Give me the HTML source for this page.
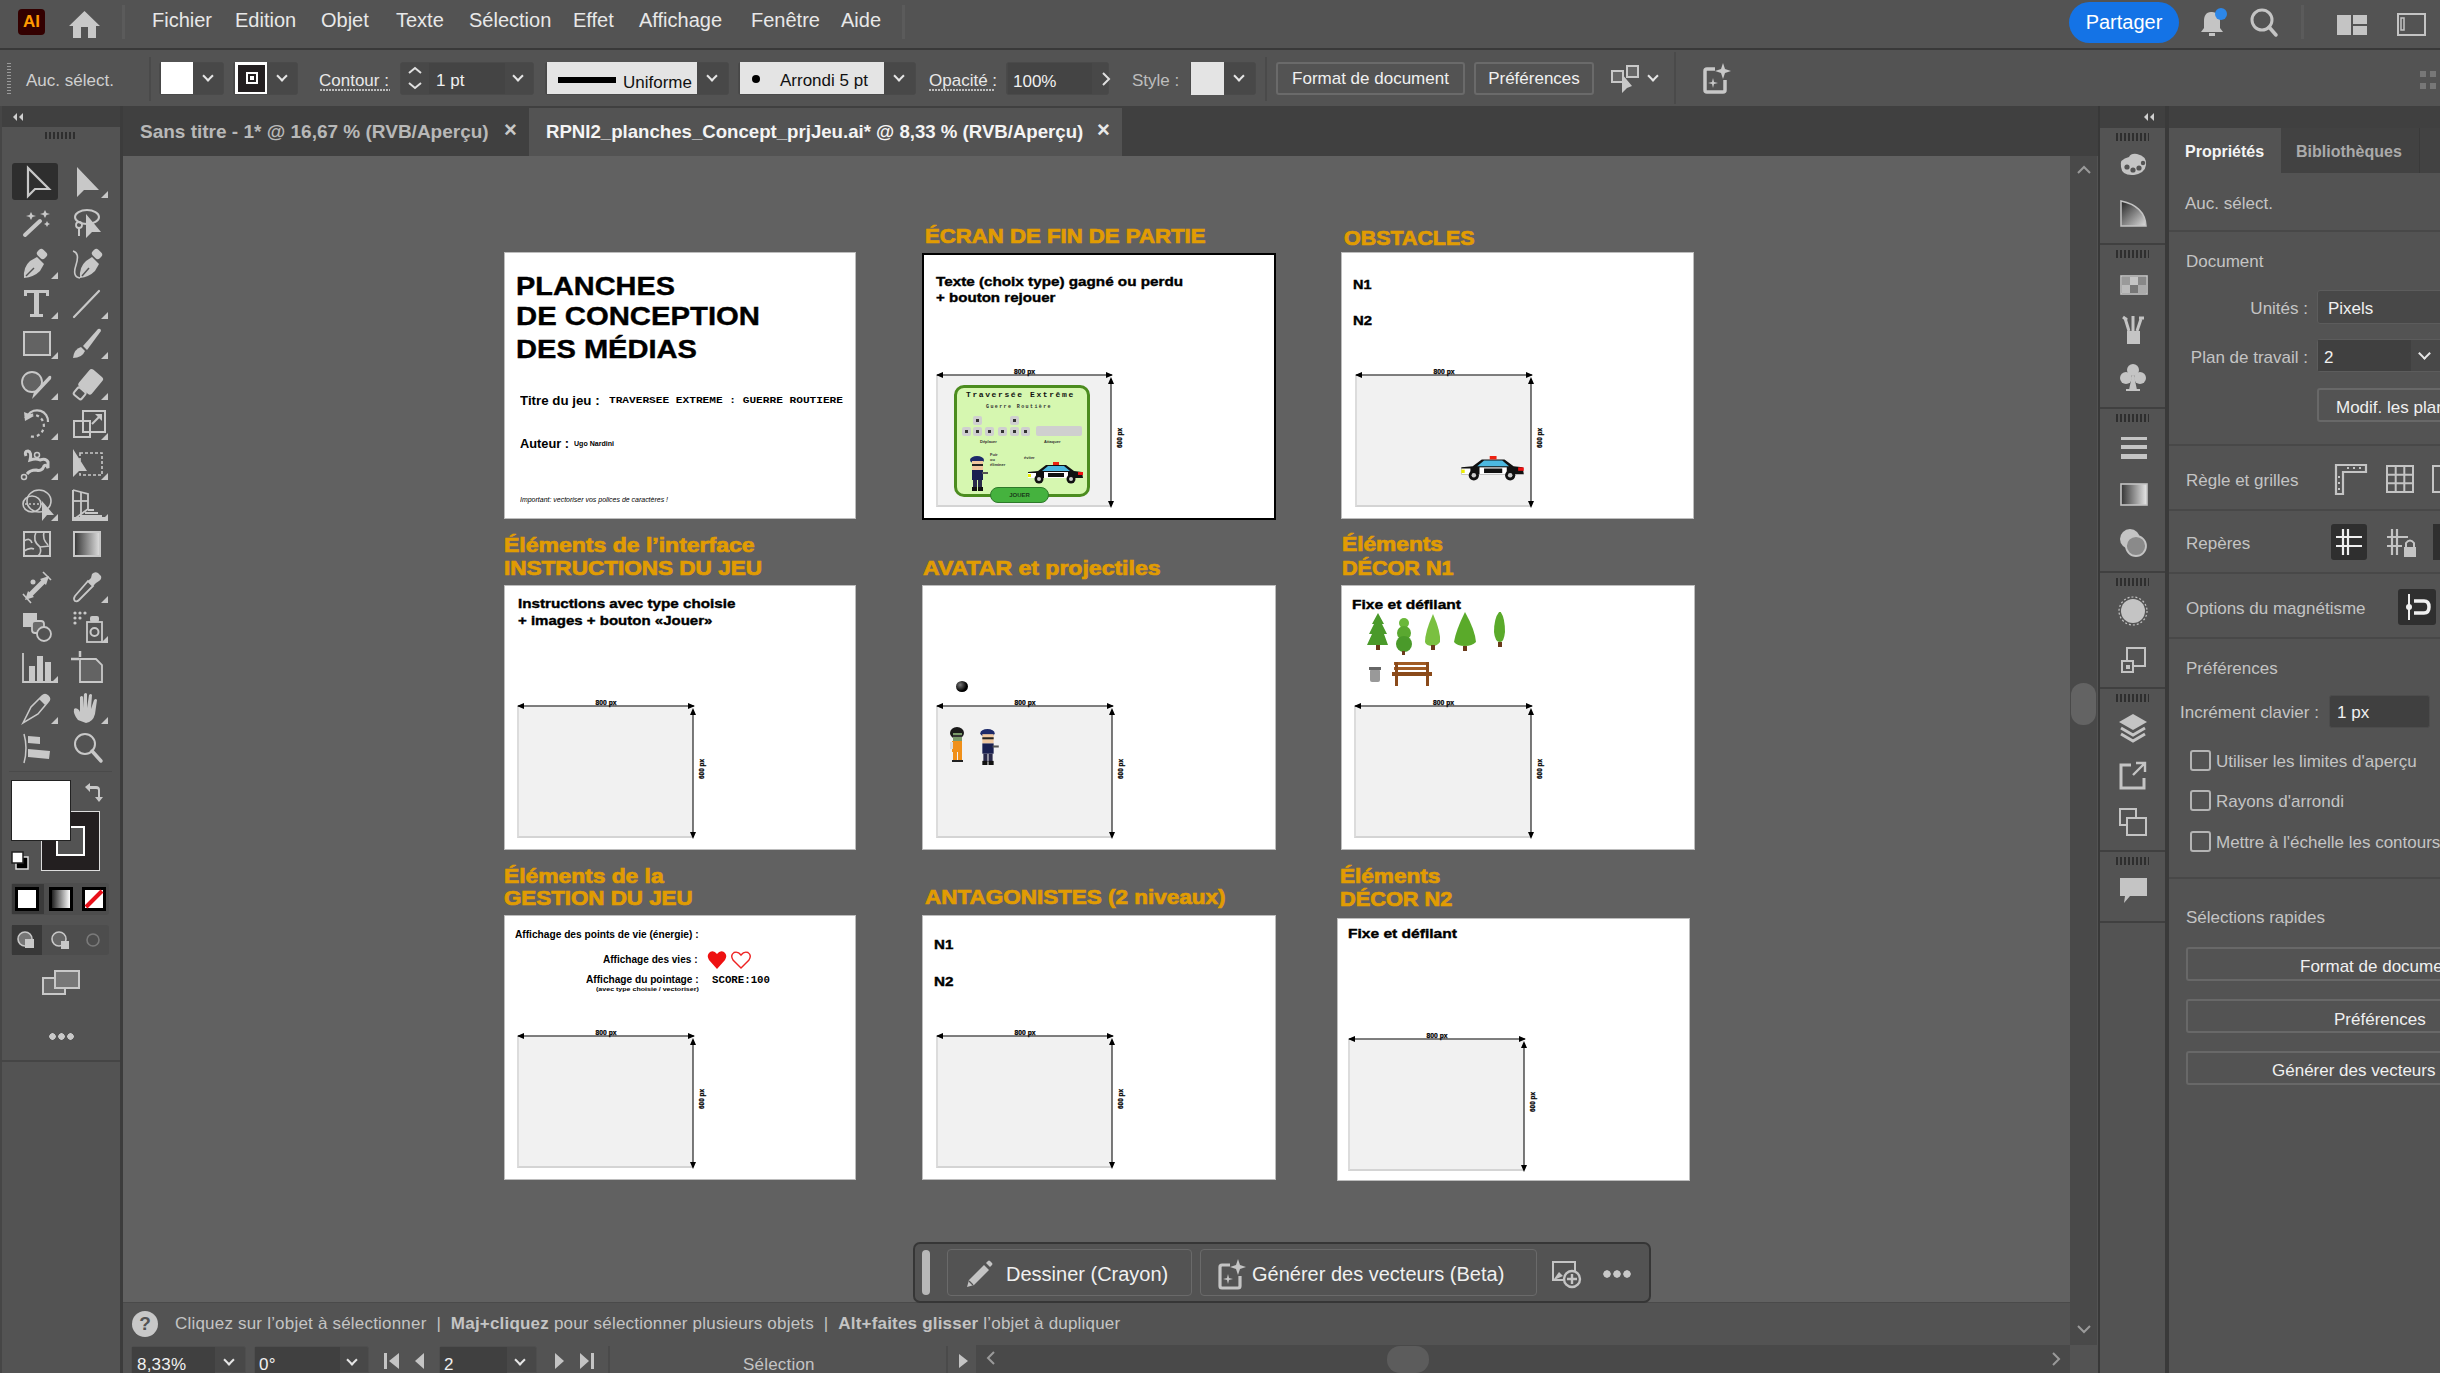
<!DOCTYPE html>
<html><head><meta charset="utf-8">
<style>
*{box-sizing:border-box;margin:0;padding:0}
html,body{width:2440px;height:1373px;overflow:hidden;background:#535353;font-family:"Liberation Sans",sans-serif;color:#e6e6e6}
.a{position:absolute}
#menubar{left:0;top:0;width:2440px;height:48px;background:#535353}
#menusep{left:0;top:48px;width:2440px;height:2px;background:#393939}
#ctrl{left:0;top:50px;width:2440px;height:56px;background:#535353}
#tlhead{left:0;top:106px;width:121px;height:21px;background:#404040}
#tools{left:0;top:127px;width:121px;height:934px;background:#535353}
#tabbar{left:123px;top:106px;width:1975px;height:50px;background:#404040}
#canvas{left:123px;top:156px;width:1947px;height:1147px;background:#616161}
#vscroll{left:2070px;top:156px;width:27px;height:1189px;background:#494949}
#hint{left:123px;top:1303px;width:1947px;height:42px;background:#535353}
#bottom{left:123px;top:1345px;width:1975px;height:28px;background:#535353}
#rhead{left:2100px;top:106px;width:340px;height:22px;background:#404040}
#ricons{left:2100px;top:128px;width:64px;height:1245px;background:#535353}
#rpanel{left:2168px;top:128px;width:272px;height:1245px;background:#535353}
.mi{position:absolute;top:9px;font-size:20px;color:#e8e8e8;white-space:nowrap}
.ab{position:absolute;background:#fff;border:1px solid #c9c9c9}
.cl{font-size:17px;color:#cfcfcf;white-space:nowrap;line-height:23px}
.box{border:1px solid #4a4a4a;border-radius:3px;background:#484848}
.chev{width:8px;height:8px;border-right:2px solid #e6e6e6;border-bottom:2px solid #e6e6e6;transform:rotate(45deg)}
.btn{border:2px solid #6a6a6a;border-radius:3px;color:#f0f0f0;font-size:17px;line-height:29px;text-align:center;white-space:nowrap}
.tab{font-size:19px;font-weight:bold;white-space:nowrap;line-height:22px}
.pt{font-size:17px;color:#c4c4c4;white-space:nowrap;line-height:23px}
.sep{left:2169px;width:271px;height:2px;background:#484848}
.cb{left:2190px;width:21px;height:21px;border:2px solid #b4b4b4;border-radius:3px}
.pbtn{left:2186px;width:260px;height:34px;border:2px solid #686868;border-radius:3px}
.ht{font-size:17px;color:#c4c4c4;white-space:nowrap;line-height:20px;letter-spacing:0.2px}
.tb{font-size:20px;color:#f0f0f0;white-space:nowrap;line-height:24px}
.ttl{position:absolute;color:#e09b0b;font-weight:bold;font-size:21px;line-height:23px;white-space:nowrap;letter-spacing:0.2px}
</style></head><body>
<div class="a" id="menubar"></div>
<div class="a" id="menusep"></div>
<div class="a" id="ctrl"></div>
<div class="a" id="tlhead"></div>
<div class="a" id="tools"></div>
<div class="a" id="tabbar"></div>
<div class="a" id="canvas"></div>
<div class="a" id="vscroll"></div>
<div class="a" id="hint"></div>
<div class="a" id="bottom"></div>
<div class="a" id="rhead"></div>
<div class="a" id="ricons"></div>
<div class="a" id="rpanel"></div>

<!-- menu -->
<div class="a" style="left:18px;top:9px;width:27px;height:26px;background:#330000;border-radius:4px"></div>
<div class="a" style="left:23px;top:12px;width:18px;font-weight:bold;font-size:17px;color:#ff9a00;letter-spacing:0px">AI</div>
<svg class="a" style="left:68px;top:10px" width="33" height="29" viewBox="0 0 33 29"><path d="M16.5 1 L32 16 L28 16 L28 28 L20 28 L20 17 L13 17 L13 28 L5 28 L5 16 L1 16 Z" fill="#c8c8c8"/></svg>
<div class="a" style="left:122px;top:5px;width:3px;height:34px;background:#5b5b5b"></div>
<span class="mi" style="left:152px">Fichier</span>
<span class="mi" style="left:235px">Edition</span>
<span class="mi" style="left:321px">Objet</span>
<span class="mi" style="left:396px">Texte</span>
<span class="mi" style="left:469px">Sélection</span>
<span class="mi" style="left:573px">Effet</span>
<span class="mi" style="left:639px">Affichage</span>
<span class="mi" style="left:751px">Fenêtre</span>
<span class="mi" style="left:841px">Aide</span>
<div class="a" style="left:902px;top:5px;width:3px;height:34px;background:#5b5b5b"></div>
<div class="a" style="left:2069px;top:2px;width:110px;height:41px;background:#1473e6;border-radius:21px;color:#fff;font-size:20px;line-height:41px;text-align:center">Partager</div>
<svg class="a" style="left:2198px;top:6px" width="36" height="32" viewBox="0 0 36 32"><path d="M13 6 C8 6 6 10 6 15 L6 22 L3 26 L25 26 L22 22 L22 15 C22 10 19 6 14 6 Z" fill="#c4c4c4"/><rect x="11" y="27" width="6" height="3" fill="#c4c4c4"/><circle cx="23" cy="8" r="6" fill="#2d87e8"/></svg>
<svg class="a" style="left:2246px;top:6px" width="36" height="34" viewBox="0 0 36 34"><circle cx="16" cy="14" r="10" fill="none" stroke="#c4c4c4" stroke-width="3"/><line x1="23" y1="21" x2="30" y2="29" stroke="#c4c4c4" stroke-width="3.5" stroke-linecap="round"/></svg>
<div class="a" style="left:2301px;top:5px;width:3px;height:34px;background:#5b5b5b"></div>
<svg class="a" style="left:2337px;top:15px" width="31" height="21" viewBox="0 0 31 21"><rect x="0" y="0" width="14" height="20" fill="#c4c4c4"/><rect x="16" y="0" width="14" height="9" fill="#c4c4c4"/><rect x="16" y="11" width="14" height="9" fill="#c4c4c4"/></svg>
<svg class="a" style="left:2397px;top:13px" width="29" height="23" viewBox="0 0 29 23"><rect x="1" y="1" width="27" height="21" fill="none" stroke="#c4c4c4" stroke-width="2"/><rect x="4" y="5" width="3" height="12" fill="none" stroke="#c4c4c4" stroke-width="1.5"/></svg>

<!-- control bar -->
<div class="a" style="left:7px;top:63px;width:4px;height:32px;background:repeating-linear-gradient(#9a9a9a 0 1px,transparent 1px 3px)"></div>
<span class="a cl" style="left:26px;top:69px">Auc. sélect.</span>
<div class="a" style="left:149px;top:57px;width:2px;height:44px;background:#4a4a4a"></div>
<div class="a box" style="left:159px;top:62px;width:65px;height:33px"></div>
<div class="a" style="left:161px;top:62px;width:32px;height:32px;background:#fff"></div>
<div class="a chev" style="left:204px;top:72px"></div>
<div class="a box" style="left:233px;top:62px;width:65px;height:33px"></div>
<div class="a" style="left:235px;top:62px;width:32px;height:32px;background:#fff"></div>
<div class="a" style="left:238px;top:65px;width:27px;height:27px;background:#231f20"></div>
<div class="a" style="left:246px;top:72px;width:12px;height:12px;border:2px solid #fff;padding:2px"><div style="width:100%;height:100%;background:#fff"></div></div>
<div class="a chev" style="left:278px;top:72px"></div>
<span class="a cl" style="left:319px;top:69px;color:#e8e8e8">Contour :</span>
<div class="a" style="left:320px;top:89px;width:70px;height:2px;background:repeating-linear-gradient(90deg,#bdbdbd 0 2px,transparent 2px 3px)"></div>
<div class="a box" style="left:400px;top:62px;width:134px;height:33px"></div>
<div class="a" style="left:429px;top:63px;width:76px;height:31px;background:#444"></div>
<svg class="a" style="left:405px;top:64px" width="20" height="28" viewBox="0 0 20 28"><path d="M4 9 L10 4 L16 9 M4 19 L10 24 L16 19" fill="none" stroke="#e0e0e0" stroke-width="2"/></svg>
<span class="a cl" style="left:436px;top:69px;color:#f0f0f0">1 pt</span>
<div class="a chev" style="left:514px;top:72px"></div>
<div class="a box" style="left:545px;top:62px;width:184px;height:33px"></div>
<div class="a" style="left:547px;top:62px;width:150px;height:32px;background:#e4e4e4"></div>
<div class="a" style="left:558px;top:77px;width:58px;height:6px;background:#000"></div>
<span class="a cl" style="left:623px;top:71px;color:#111">Uniforme</span>
<div class="a chev" style="left:708px;top:72px"></div>
<div class="a box" style="left:738px;top:62px;width:178px;height:33px"></div>
<div class="a" style="left:740px;top:62px;width:144px;height:32px;background:#e4e4e4"></div>
<div class="a" style="left:752px;top:75px;width:8px;height:8px;background:#000;border-radius:50%"></div>
<span class="a cl" style="left:780px;top:69px;color:#111">Arrondi 5 pt</span>
<div class="a chev" style="left:895px;top:72px"></div>
<span class="a cl" style="left:929px;top:69px;color:#e8e8e8">Opacité :</span>
<div class="a" style="left:929px;top:89px;width:66px;height:2px;background:repeating-linear-gradient(90deg,#bdbdbd 0 2px,transparent 2px 3px)"></div>
<div class="a box" style="left:1006px;top:62px;width:103px;height:33px"></div>
<div class="a" style="left:1008px;top:63px;width:84px;height:31px;background:#444"></div>
<span class="a cl" style="left:1013px;top:70px;color:#f0f0f0">100%</span>
<svg class="a" style="left:1100px;top:71px" width="12" height="16" viewBox="0 0 12 16"><path d="M3 2 L9 8 L3 14" fill="none" stroke="#e0e0e0" stroke-width="2"/></svg>
<span class="a cl" style="left:1132px;top:69px;color:#bdbdbd">Style :</span>
<div class="a box" style="left:1190px;top:62px;width:66px;height:33px"></div>
<div class="a" style="left:1191px;top:62px;width:33px;height:33px;background:#e4e4e4"></div>
<div class="a chev" style="left:1235px;top:72px"></div>
<div class="a" style="left:1265px;top:57px;width:2px;height:44px;background:#4a4a4a"></div>
<div class="a btn" style="left:1276px;top:62px;width:189px;height:33px">Format de document</div>
<div class="a btn" style="left:1474px;top:62px;width:120px;height:33px">Préférences</div>
<svg class="a" style="left:1610px;top:64px" width="32" height="30" viewBox="0 0 32 30"><rect x="2" y="7" width="11" height="11" fill="#666" stroke="#c8c8c8" stroke-width="2"/><rect x="17" y="2" width="11" height="11" fill="#666" stroke="#c8c8c8" stroke-width="2"/><path d="M12 10 L12 29 L17 24 L22 22 Z" fill="#c8c8c8"/></svg>
<div class="a chev" style="left:1649px;top:72px"></div>
<div class="a" style="left:1674px;top:52px;width:2px;height:52px;background:#4a4a4a"></div>
<svg class="a" style="left:1702px;top:62px" width="30" height="32" viewBox="0 0 30 32"><path d="M13 7 L5 7 Q3 7 3 9 L3 28 Q3 30 5 30 L21 30 Q23 30 23 28 L23 18" fill="none" stroke="#c8c8c8" stroke-width="3.5"/><path d="M21 1 L23 7 L29 9 L23 11 L21 17 L19 11 L13 9 L19 7 Z" fill="#c8c8c8"/><path d="M11 16 L12 20 L16 21 L12 22 L11 26 L10 22 L6 21 L10 20 Z" fill="#c8c8c8"/></svg>
<svg class="a" style="left:2418px;top:68px" width="22" height="26" viewBox="0 0 22 26"><rect x="2" y="3" width="6" height="6" fill="#777"/><rect x="12" y="3" width="6" height="6" fill="#777"/><rect x="2" y="15" width="6" height="6" fill="#777"/><rect x="12" y="15" width="6" height="6" fill="#777"/></svg>

<!-- tabs -->
<div class="a" style="left:0;top:106px;width:2px;height:1267px;background:#464646"></div>
<div class="a" style="left:120px;top:106px;width:3px;height:1267px;background:#3c3c3c"></div>
<div class="a" style="left:529px;top:108px;width:593px;height:48px;background:#535353"></div>
<span class="a tab" id="tab1" style="left:140px;top:121px;color:#b8b8b8">Sans titre - 1* @ 16,67 % (RVB/Aperçu)</span>
<span class="a tab" style="left:504px;top:119px;color:#c8c8c8;font-weight:bold;font-size:22px">×</span>
<span class="a tab" id="tab2" style="left:546px;top:121px;color:#f4f4f4;transform:scaleX(0.98);transform-origin:0 0">RPNI2_planches_Concept_prjJeu.ai* @ 8,33 % (RVB/Aperçu)</span>
<span class="a tab" style="left:1097px;top:119px;color:#e8e8e8;font-weight:bold;font-size:22px">×</span>
<div class="a" style="left:45px;top:132px;width:30px;height:7px;background:repeating-linear-gradient(90deg,#2e2e2e 0 2px,transparent 2px 4px)"></div>

<!-- toolbar -->
<div class="a" style="left:12px;top:163px;width:46px;height:37px;background:#2e2e2e;border-radius:3px"></div>
<svg class="a" style="left:20px;top:164px" width="40" height="36" viewBox="0 0 40 36"><path d="M8 4 L8 32 L15 25 L29 25 Z" fill="none" stroke="#c8c8c8" stroke-width="2.2" stroke-linejoin="miter"/></svg>
<svg class="a" style="left:70px;top:164px" width="40" height="36" viewBox="0 0 40 36"><path d="M7 3 L7 33 L14 26 L29 26 Z" fill="#c8c8c8"/><path d="M38 27 L38 34 L31 34 Z" fill="#c8c8c8"/></svg>
<svg class="a" style="left:20px;top:204px" width="40" height="36" viewBox="0 0 40 36"><line x1="5" y1="31" x2="20" y2="17" stroke="#c8c8c8" stroke-width="4" stroke-linecap="round"/><path d="M11 8 L12.5 11 L16 12 L12.5 13 L11 16 L9.5 13 L6 12 L9.5 11Z M25 6 L26.5 9 L30 10 L26.5 11 L25 14 L23.5 11 L20 10 L23.5 9Z M27 17 L28 19 L30 20 L28 21 L27 23 L26 21 L24 20 L26 19Z" fill="#c8c8c8"/></svg>
<svg class="a" style="left:70px;top:204px" width="40" height="36" viewBox="0 0 40 36"><ellipse cx="17" cy="13" rx="12" ry="7" fill="none" stroke="#c8c8c8" stroke-width="2"/><circle cx="9" cy="21" r="3" fill="none" stroke="#c8c8c8" stroke-width="1.8"/><line x1="9" y1="24" x2="9" y2="32" stroke="#c8c8c8" stroke-width="2"/><path d="M16 10 L16 34 L22 28 L31 28 Z" fill="#c8c8c8"/></svg>
<svg class="a" style="left:20px;top:245px" width="40" height="36" viewBox="0 0 40 36"><path d="M4 33 Q3 22 10 16 L17 12 L24 19 L20 26 Q14 32 4 33 Z" fill="#c8c8c8"/><rect x="17" y="5" width="10" height="8" rx="3" transform="rotate(45 22 9)" fill="#c8c8c8"/><line x1="6" y1="31" x2="14" y2="23" stroke="#535353" stroke-width="1.5"/><path d="M38 27 L38 34 L31 34 Z" fill="#c8c8c8"/></svg>
<svg class="a" style="left:70px;top:245px" width="40" height="36" viewBox="0 0 40 36"><path d="M10 33 Q9 22 16 16 L22 12 L29 19 L25 26 Q19 32 10 33 Z" fill="#c8c8c8"/><rect x="22" y="5" width="10" height="8" rx="3" transform="rotate(45 27 9)" fill="#c8c8c8"/><path d="M3 6 Q10 8 6 20 Q2 32 10 33" fill="none" stroke="#c8c8c8" stroke-width="1.6"/><line x1="12" y1="31" x2="19" y2="23" stroke="#535353" stroke-width="1.5"/></svg>
<svg class="a" style="left:20px;top:285px" width="40" height="36" viewBox="0 0 40 36"><path d="M4 5 L29 5 L29 11 L26 11 L26 8 L19 8 L19 29 L23 29 L23 32 L10 32 L10 29 L14 29 L14 8 L7 8 L7 11 L4 11 Z" fill="#c8c8c8"/><path d="M38 27 L38 34 L31 34 Z" fill="#c8c8c8"/></svg>
<svg class="a" style="left:70px;top:285px" width="40" height="36" viewBox="0 0 40 36"><line x1="4" y1="32" x2="29" y2="6" stroke="#c8c8c8" stroke-width="2.2" stroke-linecap="round"/><path d="M38 27 L38 34 L31 34 Z" fill="#c8c8c8"/></svg>
<svg class="a" style="left:20px;top:325px" width="40" height="36" viewBox="0 0 40 36"><rect x="4" y="7" width="26" height="23" fill="#636363" stroke="#c8c8c8" stroke-width="2"/><path d="M38 27 L38 34 L31 34 Z" fill="#c8c8c8"/></svg>
<svg class="a" style="left:70px;top:325px" width="40" height="36" viewBox="0 0 40 36"><path d="M3 33 Q4 24 11 22 L15 26 Q12 33 3 33 Z" fill="#c8c8c8"/><path d="M13 21 L28 4 Q31 3 31 6 L17 25 Z" fill="#c8c8c8"/><path d="M38 27 L38 34 L31 34 Z" fill="#c8c8c8"/></svg>
<svg class="a" style="left:20px;top:366px" width="40" height="36" viewBox="0 0 40 36"><circle cx="12" cy="16" r="10" fill="#636363" stroke="#c8c8c8" stroke-width="1.8"/><path d="M12 33 L14 26 L29 10 Q32 9 31 13 L16 29 Z" fill="#c8c8c8"/><path d="M38 27 L38 34 L31 34 Z" fill="#c8c8c8"/></svg>
<svg class="a" style="left:70px;top:366px" width="40" height="36" viewBox="0 0 40 36"><rect x="11" y="4" width="17" height="22" rx="3" transform="rotate(40 19 17)" fill="#c8c8c8"/><rect x="5" y="23" width="10" height="9" rx="2" transform="rotate(40 10 27)" fill="#535353" stroke="#c8c8c8" stroke-width="2"/><path d="M38 27 L38 34 L31 34 Z" fill="#c8c8c8"/></svg>
<svg class="a" style="left:20px;top:406px" width="40" height="36" viewBox="0 0 40 36"><path d="M5 12 A11 11 0 1 1 9 30" fill="none" stroke="#c8c8c8" stroke-width="2.2" stroke-dasharray="3 3"/><path d="M4 6 L14 10 L5 15 Z" fill="#c8c8c8"/><path d="M8 9 A11 11 0 0 1 28 16" fill="none" stroke="#c8c8c8" stroke-width="2.2"/><path d="M38 27 L38 34 L31 34 Z" fill="#c8c8c8"/></svg>
<svg class="a" style="left:70px;top:406px" width="40" height="36" viewBox="0 0 40 36"><rect x="4" y="15" width="16" height="16" fill="none" stroke="#c8c8c8" stroke-width="2"/><rect x="13" y="5" width="22" height="21" fill="none" stroke="#c8c8c8" stroke-width="2"/><line x1="22" y1="18" x2="30" y2="10" stroke="#c8c8c8" stroke-width="2"/><path d="M25 8 L32 8 L32 15 Z" fill="#c8c8c8"/><path d="M38 27 L38 34 L31 34 Z" fill="#c8c8c8"/></svg>
<svg class="a" style="left:20px;top:446px" width="40" height="36" viewBox="0 0 40 36"><path d="M6 10 Q4 5 8 5 Q12 6 10 14 Q16 12 20 14 Q26 12 28 16 L28 22 Q26 18 24 20 Q22 26 16 24 Q10 24 7 28" fill="none" stroke="#c8c8c8" stroke-width="3"/><circle cx="17" cy="9" r="2.5" fill="none" stroke="#c8c8c8" stroke-width="1.5"/><circle cx="4" cy="31" r="2.5" fill="none" stroke="#c8c8c8" stroke-width="1.5"/><path d="M38 27 L38 34 L31 34 Z" fill="#c8c8c8"/></svg>
<svg class="a" style="left:70px;top:446px" width="40" height="36" viewBox="0 0 40 36"><path d="M3 3 L3 31 L9 25 L17 25 Z" fill="#c8c8c8"/><rect x="10" y="7" width="22" height="22" fill="none" stroke="#c8c8c8" stroke-width="1.6" stroke-dasharray="3 2"/><path d="M38 27 L38 34 L31 34 Z" fill="#c8c8c8"/></svg>
<svg class="a" style="left:20px;top:487px" width="40" height="36" viewBox="0 0 40 36"><ellipse cx="12" cy="17" rx="9" ry="8" fill="none" stroke="#c8c8c8" stroke-width="1.6"/><ellipse cx="19" cy="14" rx="12" ry="11" fill="none" stroke="#c8c8c8" stroke-width="1.6"/><line x1="5" y1="17" x2="22" y2="17" stroke="#c8c8c8" stroke-width="1.5" stroke-dasharray="2 2"/><path d="M22 14 L22 34 L27 28 L34 28 Z" fill="#c8c8c8"/><path d="M38 27 L38 34 L31 34 Z" fill="#c8c8c8"/></svg>
<svg class="a" style="left:70px;top:487px" width="40" height="36" viewBox="0 0 40 36"><path d="M3 3 L3 33 L35 33 L35 31 L3 31" fill="none" stroke="#c8c8c8" stroke-width="2"/><path d="M3 3 L18 7 L18 22 L3 33" fill="none" stroke="#c8c8c8" stroke-width="1.8"/><line x1="11" y1="5" x2="11" y2="27" stroke="#c8c8c8" stroke-width="1.8"/><line x1="3" y1="14" x2="18" y2="14" stroke="#c8c8c8" stroke-width="1.8"/><path d="M18 23 L24 23 M15 26 L28 26 M10 29 L32 29" stroke="#c8c8c8" stroke-width="2"/><path d="M38 27 L38 34 L31 34 Z" fill="#c8c8c8"/></svg>
<svg class="a" style="left:20px;top:527px" width="40" height="36" viewBox="0 0 40 36"><rect x="4" y="5" width="26" height="24" fill="none" stroke="#c8c8c8" stroke-width="2"/><path d="M4 14 Q10 10 12 16 M16 5 Q12 14 20 20 Q22 26 18 29 M20 20 L30 19 M4 24 Q10 20 14 22 M24 5 Q22 12 28 18" fill="none" stroke="#c8c8c8" stroke-width="1.6"/></svg>
<svg class="a" style="left:70px;top:527px" width="40" height="36" viewBox="0 0 40 36"><defs><linearGradient id="gr1"><stop offset="0" stop-color="#333"/><stop offset="1" stop-color="#e0e0e0"/></linearGradient></defs><rect x="4" y="5" width="26" height="24" fill="url(#gr1)" stroke="#c8c8c8" stroke-width="2"/></svg>
<svg class="a" style="left:20px;top:569px" width="40" height="36" viewBox="0 0 40 36"><path d="M9 27 L25 11" stroke="#c8c8c8" stroke-width="5"/><path d="M5 31 L8 22 L14 28 Z M29 7 L26 16 L20 10 Z" fill="#c8c8c8"/><path d="M3 25 L11 34 M23 3 L31 11" stroke="#c8c8c8" stroke-width="1.6"/><circle cx="13" cy="13" r="2.5" fill="#c8c8c8"/></svg>
<svg class="a" style="left:70px;top:569px" width="40" height="36" viewBox="0 0 40 36"><path d="M5 32 Q3 30 5 27 L18 12 L23 17 L9 31 Q7 33 5 32 Z" fill="none" stroke="#c8c8c8" stroke-width="1.8"/><path d="M18 12 L21 9 L22 5 Q25 2 28 4 L31 7 Q32 10 29 12 L26 14 L23 17 Z" fill="#c8c8c8"/><path d="M38 27 L38 34 L31 34 Z" fill="#c8c8c8"/></svg>
<svg class="a" style="left:20px;top:609px" width="40" height="36" viewBox="0 0 40 36"><rect x="3" y="4" width="14" height="14" fill="#c8c8c8"/><rect x="12" y="12" width="12" height="12" rx="3" fill="#6a6a6a" stroke="#c8c8c8" stroke-width="1.8"/><circle cx="24" cy="25" r="7" fill="#535353" stroke="#c8c8c8" stroke-width="1.8"/></svg>
<svg class="a" style="left:70px;top:609px" width="40" height="36" viewBox="0 0 40 36"><circle cx="5" cy="4" r="1.6" fill="#c8c8c8"/><circle cx="10" cy="4" r="1.6" fill="#c8c8c8"/><circle cx="15" cy="4" r="1.6" fill="#c8c8c8"/><circle cx="5" cy="9" r="1.6" fill="#c8c8c8"/><circle cx="10" cy="9" r="1.6" fill="#c8c8c8"/><circle cx="5" cy="14" r="1.6" fill="#c8c8c8"/><rect x="17" y="13" width="15" height="20" fill="none" stroke="#c8c8c8" stroke-width="1.8"/><rect x="20" y="7" width="9" height="6" rx="2" fill="#c8c8c8"/><circle cx="24.5" cy="23" r="4" fill="none" stroke="#c8c8c8" stroke-width="2"/><path d="M38 27 L38 34 L31 34 Z" fill="#c8c8c8"/></svg>
<svg class="a" style="left:20px;top:649px" width="40" height="36" viewBox="0 0 40 36"><path d="M3 4 L3 33 L33 33" fill="none" stroke="#c8c8c8" stroke-width="1.8"/><rect x="9" y="17" width="6" height="15" fill="#c8c8c8"/><rect x="17" y="7" width="6" height="25" fill="#c8c8c8"/><rect x="25" y="13" width="6" height="19" fill="#c8c8c8"/><path d="M38 27 L38 34 L31 34 Z" fill="#c8c8c8"/></svg>
<svg class="a" style="left:70px;top:649px" width="40" height="36" viewBox="0 0 40 36"><path d="M1 10 L9 10 M10 2 L10 8" stroke="#c8c8c8" stroke-width="2.5"/><path d="M10 10 L26 10 L32 16 L32 33 L10 33 Z" fill="#636363" stroke="#c8c8c8" stroke-width="1.8"/></svg>
<svg class="a" style="left:20px;top:690px" width="40" height="36" viewBox="0 0 40 36"><path d="M3 33 L11 17 L22 6 Q25 3 28 6 Q31 9 28 12 L18 24 Z" fill="none" stroke="#c8c8c8" stroke-width="1.6"/><path d="M22 6 Q25 3 28 6 Q31 9 28 12 L25 15 L19 9 Z" fill="#c8c8c8"/><path d="M38 27 L38 34 L31 34 Z" fill="#c8c8c8"/></svg>
<svg class="a" style="left:70px;top:690px" width="40" height="36" viewBox="0 0 40 36"><path d="M8 30 Q3 24 4 19 Q6 17 9 20 L10 22 L10 7 Q12 5 13 7 L13 18 L14 4 Q16 2 17 4 L17 18 L19 5 Q21 3 22 5 L21 19 L24 10 Q26 8 27 10 L25 24 Q23 32 16 33 Z" fill="#c8c8c8"/><path d="M38 27 L38 34 L31 34 Z" fill="#c8c8c8"/></svg>
<svg class="a" style="left:20px;top:730px" width="40" height="36" viewBox="0 0 40 36"><path d="M4 4 Q8 18 4 33" fill="none" stroke="#c8c8c8" stroke-width="1.5"/><path d="M8 6 L20 7 L20 14 L8 13 Z M8 19 L30 21 L29 29 L8 27 Z" fill="#c8c8c8"/></svg>
<svg class="a" style="left:70px;top:730px" width="40" height="36" viewBox="0 0 40 36"><circle cx="15" cy="14" r="10" fill="none" stroke="#c8c8c8" stroke-width="2"/><line x1="22" y1="21" x2="31" y2="31" stroke="#c8c8c8" stroke-width="3.5" stroke-linecap="round"/></svg>
<div class="a" style="left:9px;top:771px;width:103px;height:1px;background:#4a4a4a"></div>
<div class="a" style="left:41px;top:811px;width:59px;height:60px;background:#231f20;border:1px solid #ddd"></div>
<div class="a" style="left:56px;top:826px;width:29px;height:30px;border:2px solid #fff;background:#535353"></div>
<div class="a" style="left:11px;top:780px;width:60px;height:61px;background:#fff;border:1px solid #222"></div>
<svg class="a" style="left:82px;top:781px" width="24" height="24" viewBox="0 0 24 24"><path d="M3 6 L8 2 L8 5 L14 5 Q18 5 18 9 L18 16 L21 16 L17 21 L13 16 L16 16 L16 9 Q16 8 14 8 L8 8 L8 11 Z" fill="#c8c8c8"/></svg>
<svg class="a" style="left:10px;top:850px" width="22" height="22" viewBox="0 0 22 22"><rect x="6" y="7" width="12" height="12" fill="#000" stroke="#ddd" stroke-width="1.5"/><rect x="2" y="2" width="11" height="11" fill="#fff" stroke="#222" stroke-width="1.5"/></svg>
<div class="a" style="left:11px;top:883px;width:98px;height:32px;background:#4d4d4d;border-radius:3px"></div>
<div class="a" style="left:12px;top:884px;width:32px;height:30px;background:#3a3a3a"></div>
<div class="a" style="left:15px;top:887px;width:24px;height:24px;background:#fff;border:3px solid #000"></div>
<div class="a" style="left:49px;top:887px;width:24px;height:24px;background:linear-gradient(90deg,#222,#fff);border:3px solid #000"></div>
<svg class="a" style="left:82px;top:887px" width="24" height="24" viewBox="0 0 24 24"><rect x="1.5" y="1.5" width="21" height="21" fill="#fff" stroke="#000" stroke-width="3"/><line x1="4" y1="20" x2="20" y2="4" stroke="#e8101a" stroke-width="4"/></svg>
<div class="a" style="left:11px;top:925px;width:98px;height:30px;background:#4d4d4d;border-radius:3px"></div>
<div class="a" style="left:12px;top:925px;width:30px;height:30px;background:#383838"></div>
<svg class="a" style="left:14px;top:928px" width="90" height="24" viewBox="0 0 90 24"><circle cx="11" cy="11" r="7" fill="#777" stroke="#c8c8c8" stroke-width="1.6"/><rect x="11" y="11" width="9" height="9" fill="#c8c8c8"/><circle cx="45" cy="11" r="7" fill="#666" stroke="#c8c8c8" stroke-width="1.6"/><rect x="47" y="13" width="8" height="8" fill="#c8c8c8"/><circle cx="79" cy="12" r="6" fill="none" stroke="#7a7a7a" stroke-width="1.6"/></svg>
<svg class="a" style="left:41px;top:968px" width="40" height="30" viewBox="0 0 40 30"><rect x="2" y="10" width="22" height="16" fill="#6a6a6a" stroke="#c8c8c8" stroke-width="2"/><rect x="14" y="3" width="24" height="17" fill="#777" stroke="#c8c8c8" stroke-width="2"/></svg>
<div class="a" style="left:48px;top:1033px;width:26px;height:7px;background:radial-gradient(circle,#c8c8c8 3px,transparent 3.5px) 0 0/9px 7px"></div>
<div class="a" style="left:0;top:1060px;width:120px;height:2px;background:#454545"></div>

<!-- right panel -->
<div class="a" style="left:2098px;top:106px;width:2px;height:1267px;background:#383838"></div>
<div class="a" style="left:2165px;top:106px;width:4px;height:1267px;background:#3a3a3a"></div>
<div class="a" style="left:2281px;top:128px;width:159px;height:45px;background:#424242"></div>
<div class="a" style="left:2419px;top:128px;width:1px;height:45px;background:#3a3a3a"></div>
<span class="a pt" style="left:2185px;top:140px;color:#f4f4f4;font-weight:bold;font-size:16px">Propriétés</span>
<span class="a pt" style="left:2296px;top:140px;color:#aaaaaa;font-weight:bold;font-size:16px">Bibliothèques</span>
<span class="a pt" style="left:2185px;top:192px">Auc. sélect.</span>
<div class="a sep" style="top:230px"></div>
<span class="a pt" style="left:2186px;top:250px">Document</span>
<span class="a pt" style="left:2200px;top:297px;width:108px;text-align:right">Unités :</span>
<div class="a" style="left:2317px;top:290px;width:130px;height:34px;background:#484848;border:1px solid #5c5c5c;border-radius:3px"></div>
<span class="a pt" style="left:2328px;top:297px;color:#f0f0f0">Pixels</span>
<span class="a pt" style="left:2150px;top:346px;width:158px;text-align:right">Plan de travail :</span>
<div class="a" style="left:2317px;top:339px;width:130px;height:33px;background:#484848;border:1px solid #5c5c5c;border-radius:3px"></div>
<div class="a" style="left:2318px;top:340px;width:93px;height:31px;background:#404040"></div>
<span class="a pt" style="left:2324px;top:346px;color:#f0f0f0">2</span>
<div class="a chev" style="left:2420px;top:349px;width:9px;height:9px"></div>
<div class="a" style="left:2317px;top:388px;width:130px;height:34px;border:2px solid #686868;border-radius:3px"></div>
<span class="a pt" style="left:2336px;top:396px;color:#f0f0f0">Modif. les plans de travail</span>
<div class="a sep" style="top:444px"></div>
<span class="a pt" style="left:2186px;top:469px">Règle et grilles</span>
<svg class="a" style="left:2334px;top:463px" width="34" height="32" viewBox="0 0 34 32"><path d="M2 2 L32 2 L32 9 L9 9 L9 31 L2 31 Z" fill="none" stroke="#c4c4c4" stroke-width="2.2"/><path d="M13 5 h2 M19 5 h2 M25 5 h2 M5 13 v2 M5 19 v2 M5 25 v2" stroke="#c4c4c4" stroke-width="2"/></svg>
<svg class="a" style="left:2385px;top:464px" width="30" height="30" viewBox="0 0 30 30"><path d="M2 2 H28 V28 H2 Z M10.7 2 V28 M19.3 2 V28 M2 10.7 H28 M2 19.3 H28" fill="none" stroke="#c4c4c4" stroke-width="2"/></svg>
<div class="a" style="left:2432px;top:465px;width:8px;height:28px;border:2px solid #c4c4c4;border-right:none"></div>
<div class="a sep" style="top:509px"></div>
<span class="a pt" style="left:2186px;top:532px">Repères</span>
<div class="a" style="left:2331px;top:524px;width:36px;height:36px;background:#2f2f2f;border-radius:3px"></div>
<svg class="a" style="left:2333px;top:526px" width="32" height="32" viewBox="0 0 32 32"><path d="M10 3 V29 M15 3 V29 M3 11 H29 M3 20 H29" stroke="#f0f0f0" stroke-width="2.2"/></svg>
<svg class="a" style="left:2384px;top:526px" width="36" height="34" viewBox="0 0 36 34"><path d="M8 3 V29 M13 3 V29 M3 11 H24 M3 20 H18" stroke="#c4c4c4" stroke-width="2.2"/><rect x="20" y="21" width="12" height="10" fill="#c4c4c4"/><path d="M22 21 V17 Q26 12 30 17 V21" fill="none" stroke="#c4c4c4" stroke-width="2"/></svg>
<div class="a" style="left:2433px;top:524px;width:7px;height:36px;background:#2f2f2f"></div>
<div class="a sep" style="top:572px"></div>
<span class="a pt" style="left:2186px;top:597px">Options du magnétisme</span>
<div class="a" style="left:2398px;top:589px;width:38px;height:36px;background:#2f2f2f;border-radius:3px"></div>
<svg class="a" style="left:2400px;top:591px" width="36" height="32" viewBox="0 0 36 32"><path d="M9 3 V29" stroke="#f0f0f0" stroke-width="2"/><circle cx="9" cy="16" r="3" fill="#f0f0f0"/><path d="M14 10 H24 Q29 10 29 16 Q29 22 24 22 H14" fill="none" stroke="#f0f0f0" stroke-width="3.5"/></svg>
<div class="a sep" style="top:637px"></div>
<span class="a pt" style="left:2186px;top:657px">Préférences</span>
<span class="a pt" style="left:2180px;top:701px">Incrément clavier :</span>
<div class="a" style="left:2329px;top:695px;width:101px;height:33px;background:#404040;border:1px solid #4c4c4c;border-radius:3px"></div>
<span class="a pt" style="left:2337px;top:701px;color:#f0f0f0">1 px</span>
<div class="a cb" style="top:750px"></div><span class="a pt" style="left:2216px;top:750px">Utiliser les limites d'aperçu</span>
<div class="a cb" style="top:790px"></div><span class="a pt" style="left:2216px;top:790px">Rayons d'arrondi</span>
<div class="a cb" style="top:831px"></div><span class="a pt" style="left:2216px;top:831px">Mettre à l'échelle les contours</span>
<div class="a sep" style="top:877px"></div>
<span class="a pt" style="left:2186px;top:906px">Sélections rapides</span>
<div class="a pbtn" style="top:947px"></div><span class="a pt" style="left:2300px;top:955px;color:#f0f0f0">Format de document</span>
<div class="a pbtn" style="top:999px"></div><span class="a pt" style="left:2334px;top:1008px;color:#f0f0f0">Préférences</span>
<div class="a pbtn" style="top:1051px"></div><span class="a pt" style="left:2272px;top:1059px;color:#f0f0f0">Générer des vecteurs (Beta)</span>
<div class="a" style="left:2116px;top:133px;width:33px;height:8px;background:repeating-linear-gradient(90deg,#2e2e2e 0 2px,transparent 2px 4px)"></div>
<div class="a" style="left:2100px;top:243px;width:65px;height:2px;background:#404040"></div>
<div class="a" style="left:2116px;top:250px;width:33px;height:8px;background:repeating-linear-gradient(90deg,#2e2e2e 0 2px,transparent 2px 4px)"></div>
<div class="a" style="left:2100px;top:407px;width:65px;height:2px;background:#404040"></div>
<div class="a" style="left:2116px;top:414px;width:33px;height:8px;background:repeating-linear-gradient(90deg,#2e2e2e 0 2px,transparent 2px 4px)"></div>
<div class="a" style="left:2100px;top:571px;width:65px;height:2px;background:#404040"></div>
<div class="a" style="left:2116px;top:578px;width:33px;height:8px;background:repeating-linear-gradient(90deg,#2e2e2e 0 2px,transparent 2px 4px)"></div>
<div class="a" style="left:2100px;top:687px;width:65px;height:2px;background:#404040"></div>
<div class="a" style="left:2116px;top:694px;width:33px;height:8px;background:repeating-linear-gradient(90deg,#2e2e2e 0 2px,transparent 2px 4px)"></div>
<div class="a" style="left:2100px;top:850px;width:65px;height:2px;background:#404040"></div>
<div class="a" style="left:2116px;top:857px;width:33px;height:8px;background:repeating-linear-gradient(90deg,#2e2e2e 0 2px,transparent 2px 4px)"></div>
<div class="a" style="left:2100px;top:921px;width:65px;height:2px;background:#404040"></div>
<svg class="a" style="left:2117px;top:151px" width="34" height="32" viewBox="0 0 34 32"><path d="M4 16 Q2 8 12 6 Q14 2 20 3 Q30 5 29 14 Q28 22 17 24 Q5 25 4 16 Z" fill="#c4c4c4"/><circle cx="10" cy="16" r="2.6" fill="#535353"/><circle cx="16" cy="19" r="2.6" fill="#535353"/><circle cx="22" cy="17" r="2.6" fill="#535353"/><circle cx="26" cy="12" r="2.2" fill="#535353"/></svg>
<svg class="a" style="left:2117px;top:198px" width="34" height="32" viewBox="0 0 34 32"><defs><linearGradient id="cg" x1="0" y1="0" x2="1" y2="1"><stop offset="0" stop-color="#222"/><stop offset="1" stop-color="#ddd"/></linearGradient></defs><path d="M4 3 L4 28 L29 28 Q28 8 4 3 Z" fill="url(#cg)" stroke="#c4c4c4" stroke-width="1.5"/></svg>
<svg class="a" style="left:2117px;top:269px" width="34" height="32" viewBox="0 0 34 32"><rect x="4" y="7" width="26" height="18" fill="none" stroke="#c4c4c4" stroke-width="1.6"/><rect x="5" y="8" width="8" height="8" fill="#9a9a9a"/><rect x="13" y="8" width="8" height="8" fill="#c4c4c4"/><rect x="21" y="8" width="8" height="8" fill="#888"/><rect x="5" y="16" width="8" height="8" fill="#bbb"/><rect x="13" y="16" width="8" height="8" fill="#777"/><rect x="21" y="16" width="8" height="8" fill="#aaa"/></svg>
<svg class="a" style="left:2117px;top:314px" width="34" height="32" viewBox="0 0 34 32"><rect x="10" y="17" width="13" height="13" fill="#c4c4c4"/><path d="M12 17 L8 4 M16 17 L16 2 M20 17 L24 5" stroke="#c4c4c4" stroke-width="3"/><path d="M6 3 l4 3 M22 4 l5 0" stroke="#c4c4c4" stroke-width="3"/></svg>
<svg class="a" style="left:2117px;top:362px" width="34" height="32" viewBox="0 0 34 32"><circle cx="16" cy="8" r="6" fill="#c4c4c4"/><circle cx="9" cy="16" r="6" fill="#c4c4c4"/><circle cx="23" cy="16" r="6" fill="#c4c4c4"/><path d="M16 14 L13 28 H19 Z M9 28 H23" stroke="#c4c4c4" stroke-width="2" fill="#c4c4c4"/></svg>
<svg class="a" style="left:2117px;top:431px" width="34" height="32" viewBox="0 0 34 32"><rect x="4" y="6" width="26" height="3" fill="#c4c4c4"/><rect x="4" y="14" width="26" height="4" fill="#c4c4c4"/><rect x="4" y="23" width="26" height="5" fill="#c4c4c4"/></svg>
<svg class="a" style="left:2117px;top:478px" width="34" height="32" viewBox="0 0 34 32"><defs><linearGradient id="gg"><stop offset="0" stop-color="#333"/><stop offset="1" stop-color="#e8e8e8"/></linearGradient></defs><rect x="4" y="6" width="26" height="21" fill="url(#gg)" stroke="#c4c4c4" stroke-width="1.6"/></svg>
<svg class="a" style="left:2117px;top:527px" width="34" height="32" viewBox="0 0 34 32"><circle cx="13" cy="12" r="10" fill="#c4c4c4"/><circle cx="19" cy="19" r="10" fill="#8a8a8a" stroke="#c4c4c4" stroke-width="1.8"/></svg>
<svg class="a" style="left:2117px;top:595px" width="34" height="32" viewBox="0 0 34 32"><circle cx="16" cy="16" r="12" fill="#c4c4c4"/><circle cx="16" cy="16" r="14" fill="none" stroke="#c4c4c4" stroke-width="1.2" stroke-dasharray="2 2"/></svg>
<svg class="a" style="left:2117px;top:644px" width="34" height="32" viewBox="0 0 34 32"><rect x="10" y="4" width="18" height="18" fill="none" stroke="#c4c4c4" stroke-width="2"/><rect x="5" y="17" width="11" height="11" fill="#535353" stroke="#c4c4c4" stroke-width="2"/><rect x="9" y="21" width="4" height="4" fill="#c4c4c4"/></svg>
<svg class="a" style="left:2117px;top:711px" width="34" height="32" viewBox="0 0 34 32"><path d="M16 3 L30 11 L16 19 L2 11 Z" fill="#c4c4c4"/><path d="M4 17 L16 24 L28 17" fill="none" stroke="#c4c4c4" stroke-width="3"/><path d="M4 23 L16 30 L28 23" fill="none" stroke="#c4c4c4" stroke-width="3"/></svg>
<svg class="a" style="left:2117px;top:759px" width="34" height="32" viewBox="0 0 34 32"><path d="M14 6 H4 V29 H27 V19" fill="none" stroke="#c4c4c4" stroke-width="3"/><path d="M16 16 L28 4 M19 4 H28 V13" fill="none" stroke="#c4c4c4" stroke-width="2.4"/></svg>
<svg class="a" style="left:2117px;top:806px" width="34" height="32" viewBox="0 0 34 32"><rect x="3" y="3" width="16" height="16" fill="none" stroke="#c4c4c4" stroke-width="2"/><rect x="10" y="12" width="19" height="17" fill="#535353" stroke="#c4c4c4" stroke-width="2"/></svg>
<svg class="a" style="left:2117px;top:874px" width="34" height="32" viewBox="0 0 34 32"><path d="M3 4 H30 V22 H13 L7 29 L8 22 H3 Z" fill="#c4c4c4"/></svg>
<svg class="a" style="left:2144px;top:113px" width="12" height="8" viewBox="0 0 12 8"><path d="M4 0 L0 4 L4 8 Z M10 0 L6 4 L10 8 Z" fill="#d0d0d0"/></svg>
<svg class="a" style="left:13px;top:113px" width="12" height="8" viewBox="0 0 12 8"><path d="M4 0 L0 4 L4 8 Z M10 0 L6 4 L10 8 Z" fill="#d0d0d0"/></svg>
<!-- bottom -->
<div class="a" style="left:123px;top:1302px;width:1947px;height:1px;background:#4a4a4a"></div>
<div class="a" style="left:132px;top:1311px;width:26px;height:26px;border-radius:50%;background:#c8c8c8;color:#535353;font-weight:bold;font-size:19px;line-height:26px;text-align:center">?</div>
<span class="a ht" id="hint1" style="left:175px;top:1314px">Cliquez sur l’objet à sélectionner&nbsp;&nbsp;|&nbsp;&nbsp;<b>Maj+cliquez</b> pour sélectionner plusieurs objets&nbsp;&nbsp;|&nbsp;&nbsp;<b>Alt+faites glisser</b> l’objet à dupliquer</span>
<div class="a" style="left:131px;top:1346px;width:115px;height:27px;background:#484848;border:1px solid #4e4e4e;border-radius:3px 3px 0 0"></div>
<div class="a" style="left:132px;top:1347px;width:83px;height:26px;background:#404040"></div>
<span class="a ht" style="left:137px;top:1355px;color:#f0f0f0">8,33%</span>
<div class="a chev" style="left:225px;top:1356px;width:8px;height:8px"></div>
<div class="a" style="left:254px;top:1346px;width:115px;height:27px;background:#484848;border:1px solid #4e4e4e;border-radius:3px 3px 0 0"></div>
<div class="a" style="left:255px;top:1347px;width:85px;height:26px;background:#404040"></div>
<span class="a ht" style="left:259px;top:1355px;color:#f0f0f0">0°</span>
<div class="a chev" style="left:348px;top:1356px;width:8px;height:8px"></div>
<svg class="a" style="left:383px;top:1352px" width="44" height="18" viewBox="0 0 44 18"><rect x="1" y="1" width="3" height="16" fill="#c4c4c4"/><path d="M16 1 L6 9 L16 17 Z M41 1 L32 9 L41 17 Z" fill="#c4c4c4"/></svg>
<div class="a" style="left:439px;top:1346px;width:98px;height:27px;background:#484848;border:1px solid #4e4e4e;border-radius:3px 3px 0 0"></div>
<div class="a" style="left:440px;top:1347px;width:67px;height:26px;background:#404040"></div>
<span class="a ht" style="left:444px;top:1355px;color:#f0f0f0">2</span>
<div class="a chev" style="left:516px;top:1356px;width:8px;height:8px"></div>
<svg class="a" style="left:553px;top:1352px" width="44" height="18" viewBox="0 0 44 18"><path d="M2 1 L11 9 L2 17 Z M27 1 L36 9 L27 17 Z" fill="#c4c4c4"/><rect x="38" y="1" width="3" height="16" fill="#c4c4c4"/></svg>
<div class="a" style="left:608px;top:1346px;width:2px;height:27px;background:#4a4a4a"></div>
<span class="a ht" style="left:743px;top:1355px;color:#c4c4c4">Sélection</span>
<div class="a" style="left:946px;top:1346px;width:2px;height:27px;background:#4a4a4a"></div>
<svg class="a" style="left:957px;top:1353px" width="12" height="16" viewBox="0 0 12 16"><path d="M2 1 L11 8 L2 15 Z" fill="#c4c4c4"/></svg>
<div class="a" style="left:976px;top:1345px;width:1094px;height:28px;background:#494949"></div>
<svg class="a" style="left:985px;top:1350px" width="12" height="16" viewBox="0 0 12 16"><path d="M9 2 L3 8 L9 14" fill="none" stroke="#9a9a9a" stroke-width="2"/></svg>
<div class="a" style="left:1387px;top:1346px;width:42px;height:27px;border-radius:13px;background:#5c5c5c"></div>
<svg class="a" style="left:2050px;top:1351px" width="12" height="16" viewBox="0 0 12 16"><path d="M3 2 L9 8 L3 14" fill="none" stroke="#9a9a9a" stroke-width="2"/></svg>
<div class="a" style="left:2070px;top:1345px;width:28px;height:28px;background:#535353"></div>
<svg class="a" style="left:2076px;top:164px" width="16" height="12" viewBox="0 0 16 12"><path d="M2 9 L8 3 L14 9" fill="none" stroke="#9a9a9a" stroke-width="2"/></svg>
<div class="a" style="left:2071px;top:683px;width:25px;height:42px;border-radius:12px;background:#636363"></div>
<svg class="a" style="left:2076px;top:1323px" width="16" height="12" viewBox="0 0 16 12"><path d="M2 3 L8 9 L14 3" fill="none" stroke="#9a9a9a" stroke-width="2"/></svg>
<!-- taskbar -->
<div class="a" style="left:913px;top:1242px;width:738px;height:61px;background:#535353;border:2px solid #363636;border-radius:7px"></div>
<div class="a" style="left:922px;top:1250px;width:8px;height:45px;background:#b8b8b8;border-radius:4px"></div>
<div class="a" style="left:947px;top:1249px;width:245px;height:47px;border:1.5px solid #6a6a6a;border-radius:4px"></div>
<svg class="a" style="left:964px;top:1259px" width="30" height="30" viewBox="0 0 30 30"><path d="M3 28 L5 21 L20 6 L25 11 L10 26 Z" fill="#c4c4c4"/><path d="M22 4 L24 2 Q25 1 26 2 L28 4 Q29 5 28 6 L26 8 Z" fill="#c4c4c4"/><path d="M5 22 L9 26" stroke="#535353" stroke-width="1.2"/></svg>
<span class="a tb" style="left:1006px;top:1262px">Dessiner (Crayon)</span>
<div class="a" style="left:1200px;top:1249px;width:337px;height:47px;border:1.5px solid #6a6a6a;border-radius:4px"></div>
<svg class="a" style="left:1216px;top:1258px" width="32" height="32" viewBox="0 0 30 32"><path d="M13 7 L5 7 Q3 7 3 9 L3 28 Q3 30 5 30 L21 30 Q23 30 23 28 L23 18" fill="none" stroke="#c4c4c4" stroke-width="3.2"/><path d="M21 1 L23 7 L29 9 L23 11 L21 17 L19 11 L13 9 L19 7 Z" fill="#c4c4c4"/><path d="M11 16 L12 20 L16 21 L12 22 L11 26 L10 22 L6 21 L10 20 Z" fill="#c4c4c4"/></svg>
<span class="a tb" style="left:1252px;top:1262px">Générer des vecteurs (Beta)</span>
<svg class="a" style="left:1551px;top:1259px" width="32" height="30" viewBox="0 0 32 30"><rect x="2" y="3" width="22" height="18" fill="none" stroke="#c4c4c4" stroke-width="2"/><path d="M3 20 L8 13 L12 17 L3 21 Z" fill="#c4c4c4"/><circle cx="21" cy="20" r="8" fill="#535353" stroke="#c4c4c4" stroke-width="2.4"/><path d="M21 15 V25 M16 20 H26" stroke="#c4c4c4" stroke-width="2.4"/></svg>
<div class="a" style="left:1602px;top:1270px;width:29px;height:8px;background:radial-gradient(circle,#c8c8c8 3.4px,transparent 4px) 0 0/10px 8px"></div>
<!-- artboards -->
<div class="a" style="left:504px;top:252px;width:352px;height:267px;background:#fff;border:1px solid #bdbdbd"></div>
<div class="a" style="left:922px;top:253px;width:354px;height:267px;background:#fff;border:2px solid #000"></div>
<div class="a" style="left:1341px;top:252px;width:353px;height:267px;background:#fff;border:1px solid #bdbdbd"></div>
<div class="a" style="left:504px;top:585px;width:352px;height:265px;background:#fff;border:1px solid #bdbdbd"></div>
<div class="a" style="left:922px;top:585px;width:354px;height:265px;background:#fff;border:1px solid #bdbdbd"></div>
<div class="a" style="left:1341px;top:585px;width:354px;height:265px;background:#fff;border:1px solid #bdbdbd"></div>
<div class="a" style="left:504px;top:915px;width:352px;height:265px;background:#fff;border:1px solid #bdbdbd"></div>
<div class="a" style="left:922px;top:915px;width:354px;height:265px;background:#fff;border:1px solid #bdbdbd"></div>
<div class="a" style="left:1337px;top:918px;width:353px;height:263px;background:#fff;border:1px solid #bdbdbd"></div>
<div class="a" style="left:936px;top:375px;width:175px;height:132px;background:#f1f1f1;border-left:2px solid #dcdcdc;border-bottom:2px solid #d4d4d4"></div>
<svg class="a" style="left:936px;top:367px" width="189" height="142" viewBox="0 0 189 142"><line x1="1" y1="8" x2="176" y2="8" stroke="#555" stroke-width="1.3"/><path d="M0 8 L7 5 L7 11 Z M177 8 L170 5 L170 11 Z" fill="#000"/><line x1="175" y1="12" x2="175" y2="139" stroke="#333" stroke-width="1.3"/><path d="M175 10 L172 17 L178 17 Z M175 141 L172 134 L178 134 Z" fill="#000"/><text x="88.5" y="6.5" font-family="Liberation Sans" font-weight="bold" font-size="7" text-anchor="middle" fill="#000" stroke="#000" stroke-width="0.25" textLength="21" lengthAdjust="spacingAndGlyphs">800 px</text><text transform="translate(185.5 71.0) rotate(-90)" x="0" y="0" font-family="Liberation Sans" font-weight="bold" font-size="7" text-anchor="middle" fill="#000" stroke="#000" stroke-width="0.25" textLength="20" lengthAdjust="spacingAndGlyphs">600 px</text></svg>
<div class="a" style="left:1354.5px;top:375px;width:176px;height:132px;background:#f1f1f1;border-left:2px solid #dcdcdc;border-bottom:2px solid #d4d4d4"></div>
<svg class="a" style="left:1354.5px;top:367px" width="190" height="142" viewBox="0 0 190 142"><line x1="1" y1="8" x2="177" y2="8" stroke="#555" stroke-width="1.3"/><path d="M0 8 L7 5 L7 11 Z M178 8 L171 5 L171 11 Z" fill="#000"/><line x1="176" y1="12" x2="176" y2="139" stroke="#333" stroke-width="1.3"/><path d="M176 10 L173 17 L179 17 Z M176 141 L173 134 L179 134 Z" fill="#000"/><text x="89.0" y="6.5" font-family="Liberation Sans" font-weight="bold" font-size="7" text-anchor="middle" fill="#000" stroke="#000" stroke-width="0.25" textLength="21" lengthAdjust="spacingAndGlyphs">800 px</text><text transform="translate(186.5 71.0) rotate(-90)" x="0" y="0" font-family="Liberation Sans" font-weight="bold" font-size="7" text-anchor="middle" fill="#000" stroke="#000" stroke-width="0.25" textLength="20" lengthAdjust="spacingAndGlyphs">600 px</text></svg>
<div class="a" style="left:517px;top:705.5px;width:176px;height:132px;background:#f1f1f1;border-left:2px solid #dcdcdc;border-bottom:2px solid #d4d4d4"></div>
<svg class="a" style="left:517px;top:697.5px" width="190" height="142" viewBox="0 0 190 142"><line x1="1" y1="8" x2="177" y2="8" stroke="#555" stroke-width="1.3"/><path d="M0 8 L7 5 L7 11 Z M178 8 L171 5 L171 11 Z" fill="#000"/><line x1="176" y1="12" x2="176" y2="139" stroke="#333" stroke-width="1.3"/><path d="M176 10 L173 17 L179 17 Z M176 141 L173 134 L179 134 Z" fill="#000"/><text x="89.0" y="6.5" font-family="Liberation Sans" font-weight="bold" font-size="7" text-anchor="middle" fill="#000" stroke="#000" stroke-width="0.25" textLength="21" lengthAdjust="spacingAndGlyphs">800 px</text><text transform="translate(186.5 71.0) rotate(-90)" x="0" y="0" font-family="Liberation Sans" font-weight="bold" font-size="7" text-anchor="middle" fill="#000" stroke="#000" stroke-width="0.25" textLength="20" lengthAdjust="spacingAndGlyphs">600 px</text></svg>
<div class="a" style="left:936px;top:705.5px;width:176px;height:132px;background:#f1f1f1;border-left:2px solid #dcdcdc;border-bottom:2px solid #d4d4d4"></div>
<svg class="a" style="left:936px;top:697.5px" width="190" height="142" viewBox="0 0 190 142"><line x1="1" y1="8" x2="177" y2="8" stroke="#555" stroke-width="1.3"/><path d="M0 8 L7 5 L7 11 Z M178 8 L171 5 L171 11 Z" fill="#000"/><line x1="176" y1="12" x2="176" y2="139" stroke="#333" stroke-width="1.3"/><path d="M176 10 L173 17 L179 17 Z M176 141 L173 134 L179 134 Z" fill="#000"/><text x="89.0" y="6.5" font-family="Liberation Sans" font-weight="bold" font-size="7" text-anchor="middle" fill="#000" stroke="#000" stroke-width="0.25" textLength="21" lengthAdjust="spacingAndGlyphs">800 px</text><text transform="translate(186.5 71.0) rotate(-90)" x="0" y="0" font-family="Liberation Sans" font-weight="bold" font-size="7" text-anchor="middle" fill="#000" stroke="#000" stroke-width="0.25" textLength="20" lengthAdjust="spacingAndGlyphs">600 px</text></svg>
<div class="a" style="left:1354px;top:705.5px;width:177px;height:132px;background:#f1f1f1;border-left:2px solid #dcdcdc;border-bottom:2px solid #d4d4d4"></div>
<svg class="a" style="left:1354px;top:697.5px" width="191" height="142" viewBox="0 0 191 142"><line x1="1" y1="8" x2="178" y2="8" stroke="#555" stroke-width="1.3"/><path d="M0 8 L7 5 L7 11 Z M179 8 L172 5 L172 11 Z" fill="#000"/><line x1="177" y1="12" x2="177" y2="139" stroke="#333" stroke-width="1.3"/><path d="M177 10 L174 17 L180 17 Z M177 141 L174 134 L180 134 Z" fill="#000"/><text x="89.5" y="6.5" font-family="Liberation Sans" font-weight="bold" font-size="7" text-anchor="middle" fill="#000" stroke="#000" stroke-width="0.25" textLength="21" lengthAdjust="spacingAndGlyphs">800 px</text><text transform="translate(187.5 71.0) rotate(-90)" x="0" y="0" font-family="Liberation Sans" font-weight="bold" font-size="7" text-anchor="middle" fill="#000" stroke="#000" stroke-width="0.25" textLength="20" lengthAdjust="spacingAndGlyphs">600 px</text></svg>
<div class="a" style="left:517px;top:1036px;width:176px;height:132px;background:#f1f1f1;border-left:2px solid #dcdcdc;border-bottom:2px solid #d4d4d4"></div>
<svg class="a" style="left:517px;top:1028px" width="190" height="142" viewBox="0 0 190 142"><line x1="1" y1="8" x2="177" y2="8" stroke="#555" stroke-width="1.3"/><path d="M0 8 L7 5 L7 11 Z M178 8 L171 5 L171 11 Z" fill="#000"/><line x1="176" y1="12" x2="176" y2="139" stroke="#333" stroke-width="1.3"/><path d="M176 10 L173 17 L179 17 Z M176 141 L173 134 L179 134 Z" fill="#000"/><text x="89.0" y="6.5" font-family="Liberation Sans" font-weight="bold" font-size="7" text-anchor="middle" fill="#000" stroke="#000" stroke-width="0.25" textLength="21" lengthAdjust="spacingAndGlyphs">800 px</text><text transform="translate(186.5 71.0) rotate(-90)" x="0" y="0" font-family="Liberation Sans" font-weight="bold" font-size="7" text-anchor="middle" fill="#000" stroke="#000" stroke-width="0.25" textLength="20" lengthAdjust="spacingAndGlyphs">600 px</text></svg>
<div class="a" style="left:936px;top:1036px;width:176px;height:132px;background:#f1f1f1;border-left:2px solid #dcdcdc;border-bottom:2px solid #d4d4d4"></div>
<svg class="a" style="left:936px;top:1028px" width="190" height="142" viewBox="0 0 190 142"><line x1="1" y1="8" x2="177" y2="8" stroke="#555" stroke-width="1.3"/><path d="M0 8 L7 5 L7 11 Z M178 8 L171 5 L171 11 Z" fill="#000"/><line x1="176" y1="12" x2="176" y2="139" stroke="#333" stroke-width="1.3"/><path d="M176 10 L173 17 L179 17 Z M176 141 L173 134 L179 134 Z" fill="#000"/><text x="89.0" y="6.5" font-family="Liberation Sans" font-weight="bold" font-size="7" text-anchor="middle" fill="#000" stroke="#000" stroke-width="0.25" textLength="21" lengthAdjust="spacingAndGlyphs">800 px</text><text transform="translate(186.5 71.0) rotate(-90)" x="0" y="0" font-family="Liberation Sans" font-weight="bold" font-size="7" text-anchor="middle" fill="#000" stroke="#000" stroke-width="0.25" textLength="20" lengthAdjust="spacingAndGlyphs">600 px</text></svg>
<div class="a" style="left:1348.4px;top:1039px;width:176px;height:132px;background:#f1f1f1;border-left:2px solid #dcdcdc;border-bottom:2px solid #d4d4d4"></div>
<svg class="a" style="left:1348.4px;top:1031px" width="190" height="142" viewBox="0 0 190 142"><line x1="1" y1="8" x2="177" y2="8" stroke="#555" stroke-width="1.3"/><path d="M0 8 L7 5 L7 11 Z M178 8 L171 5 L171 11 Z" fill="#000"/><line x1="176" y1="12" x2="176" y2="139" stroke="#333" stroke-width="1.3"/><path d="M176 10 L173 17 L179 17 Z M176 141 L173 134 L179 134 Z" fill="#000"/><text x="89.0" y="6.5" font-family="Liberation Sans" font-weight="bold" font-size="7" text-anchor="middle" fill="#000" stroke="#000" stroke-width="0.25" textLength="21" lengthAdjust="spacingAndGlyphs">800 px</text><text transform="translate(186.5 71.0) rotate(-90)" x="0" y="0" font-family="Liberation Sans" font-weight="bold" font-size="7" text-anchor="middle" fill="#000" stroke="#000" stroke-width="0.25" textLength="20" lengthAdjust="spacingAndGlyphs">600 px</text></svg>
<div class="a" style="left:954px;top:385px;width:136px;height:112px;background:#d6f7b0;border:3px solid #4c8c1f;border-radius:10px"></div>
<span class="a" style="left:966px;top:391px;font:bold 8px/8px 'Liberation Mono',monospace;color:#111;letter-spacing:1.6px">Traversée Extrême</span>
<span class="a" style="left:986px;top:405px;font:bold 5px/5px 'Liberation Mono',monospace;color:#333;letter-spacing:1.4px">Guerre Routière</span>
<div class="a" style="left:973px;top:416px;width:9px;height:9px;background:#cfcfcf;border-radius:2px"><div style="margin:3px;width:3px;height:3px;background:#333"></div></div>
<div class="a" style="left:1010px;top:416px;width:9px;height:9px;background:#cfcfcf;border-radius:2px"><div style="margin:3px;width:3px;height:3px;background:#333"></div></div>
<div class="a" style="left:962px;top:427px;width:9px;height:9px;background:#cfcfcf;border-radius:2px"><div style="margin:3px;width:3px;height:3px;background:#333"></div></div>
<div class="a" style="left:973px;top:427px;width:9px;height:9px;background:#cfcfcf;border-radius:2px"><div style="margin:3px;width:3px;height:3px;background:#333"></div></div>
<div class="a" style="left:985px;top:427px;width:9px;height:9px;background:#cfcfcf;border-radius:2px"><div style="margin:3px;width:3px;height:3px;background:#333"></div></div>
<div class="a" style="left:998px;top:427px;width:9px;height:9px;background:#cfcfcf;border-radius:2px"><div style="margin:3px;width:3px;height:3px;background:#333"></div></div>
<div class="a" style="left:1010px;top:427px;width:9px;height:9px;background:#cfcfcf;border-radius:2px"><div style="margin:3px;width:3px;height:3px;background:#333"></div></div>
<div class="a" style="left:1021px;top:427px;width:9px;height:9px;background:#cfcfcf;border-radius:2px"><div style="margin:3px;width:3px;height:3px;background:#333"></div></div>
<div class="a" style="left:1036px;top:426px;width:46px;height:10px;background:#cfcfcf;border-radius:2px"></div>
<span class="a" style="left:980px;top:440px;font:bold 4px/4px 'Liberation Sans';color:#333">Déplacer</span><span class="a" style="left:1044px;top:440px;font:bold 4px/4px 'Liberation Sans';color:#333">Attaquer</span>
<span class="a" style="left:990px;top:452px;font:bold 4px/5px 'Liberation Sans';color:#333">Fuir<br>ou<br>éliminer</span><span class="a" style="left:1024px;top:456px;font:bold 4px/4px 'Liberation Sans';color:#333">éviter</span>
<svg class="a" style="left:968px;top:455px" width="20" height="36" viewBox="0 0 20 36"><ellipse cx="9" cy="5" rx="7" ry="4" fill="#1d2a6a"/><rect x="4" y="6" width="11" height="9" fill="#f0c8a0"/><rect x="4" y="9" width="11" height="2" fill="#222"/><rect x="4" y="15" width="11" height="10" fill="#1a2050"/><rect x="14" y="17" width="6" height="2" fill="#555"/><rect x="5" y="25" width="4" height="8" fill="#2a2a4a"/><rect x="10" y="25" width="4" height="8" fill="#2a2a4a"/><rect x="4" y="32" width="5" height="4" fill="#111"/><rect x="10" y="32" width="5" height="4" fill="#111"/></svg>
<svg class="a" style="left:1026px;top:462px" width="58" height="22" viewBox="0 0 58 22"><path d="M2 10 L12 9 L20 3 L40 3 L48 9 L56 10 L57 16 L2 16 Z" fill="#111"/><path d="M16 9 L22 4 L38 4 L44 9 Z" fill="#4cb8e0"/><rect x="27" y="0" width="6" height="3" fill="#e21"/><rect x="18" y="10" width="24" height="6" fill="#fff"/><rect x="22" y="11" width="16" height="4" fill="#111"/><rect x="2" y="11" width="8" height="5" fill="#fff"/><rect x="2" y="12" width="3" height="3" fill="#ee0"/><rect x="52" y="10" width="5" height="3" fill="#e11"/><circle cx="13" cy="17" r="4.5" fill="#111"/><circle cx="13" cy="17" r="2" fill="#ccc"/><circle cx="45" cy="17" r="4.5" fill="#111"/><circle cx="45" cy="17" r="2" fill="#ccc"/></svg>
<div class="a" style="left:990px;top:487px;width:59px;height:16px;background:#45b23e;border:1px solid #2e7a2a;border-radius:8px;font:bold 6px/14px 'Liberation Sans';color:#1a3a1a;text-align:center">JOUER</div>
<svg class="a" style="left:1459px;top:456px" width="66" height="25" viewBox="0 0 58 22"><path d="M2 10 L12 9 L20 3 L40 3 L48 9 L56 10 L57 16 L2 16 Z" fill="#111"/><path d="M16 9 L22 4 L38 4 L44 9 Z" fill="#4cb8e0"/><rect x="27" y="0" width="6" height="3" fill="#e21"/><rect x="18" y="10" width="24" height="6" fill="#fff"/><rect x="22" y="11" width="16" height="4" fill="#111"/><rect x="2" y="11" width="8" height="5" fill="#fff"/><rect x="2" y="12" width="3" height="3" fill="#ee0"/><rect x="52" y="10" width="5" height="3" fill="#e11"/><circle cx="13" cy="17" r="4.5" fill="#111"/><circle cx="13" cy="17" r="2" fill="#ccc"/><circle cx="45" cy="17" r="4.5" fill="#111"/><circle cx="45" cy="17" r="2" fill="#ccc"/></svg>
<div class="a" style="left:956px;top:681px;width:12px;height:11px;border-radius:50%;background:radial-gradient(circle at 35% 35%,#777,#000 60%)"></div>
<svg class="a" style="left:948px;top:727px" width="18" height="35" viewBox="0 0 18 35"><ellipse cx="9" cy="6" rx="7" ry="6" fill="#1a1a1a"/><rect x="5" y="6" width="9" height="8" fill="#7a9a6a"/><rect x="5" y="8" width="9" height="2" fill="#333"/><rect x="4" y="14" width="10" height="11" fill="#f0901a"/><rect x="2" y="15" width="3" height="7" fill="#ddd"/><rect x="5" y="25" width="4" height="8" fill="#f0901a"/><rect x="10" y="25" width="4" height="8" fill="#f0901a"/><rect x="4" y="33" width="11" height="2" fill="#222"/></svg>
<svg class="a" style="left:978px;top:728px" width="21" height="37" viewBox="0 0 20 36"><ellipse cx="9" cy="5" rx="7" ry="4" fill="#1d2a6a"/><rect x="4" y="6" width="11" height="9" fill="#f0c8a0"/><rect x="4" y="9" width="11" height="2" fill="#222"/><rect x="4" y="15" width="11" height="10" fill="#1a2050"/><rect x="14" y="17" width="6" height="2" fill="#555"/><rect x="5" y="25" width="4" height="8" fill="#2a2a4a"/><rect x="10" y="25" width="4" height="8" fill="#2a2a4a"/><rect x="4" y="32" width="5" height="4" fill="#111"/><rect x="10" y="32" width="5" height="4" fill="#111"/></svg>
<svg class="a" style="left:1364px;top:612px" width="150" height="76" viewBox="0 0 150 76"><path d="M14 1 L20 12 L18 12 L23 22 L20 22 L24 33 L3 33 L8 22 L5 22 L10 12 L8 12 Z" fill="#4a9a2a"/><rect x="12" y="33" width="4" height="5" fill="#6a3a1a"/><circle cx="40" cy="11" r="5" fill="#6ab83a"/><circle cx="40" cy="21" r="7" fill="#5aa830"/><circle cx="40" cy="32" r="8" fill="#4a9a2a"/><rect x="38" y="39" width="3" height="4" fill="#6a3a1a"/><path d="M69 2 Q77 20 76 30 Q73 34 69 34 Q62 34 61 30 Q61 20 69 2 Z" fill="#7ac040"/><rect x="67" y="33" width="4" height="5" fill="#6a3a1a"/><path d="M101 0 Q111 18 112 30 Q108 34 101 34 Q93 34 90 30 Q92 18 101 0 Z" fill="#5aaa2a"/><rect x="99" y="34" width="4" height="5" fill="#6a3a1a"/><path d="M136 -1 Q141 5 141 20 Q140 30 136 30 Q131 30 130 20 Q130 5 136 -1 Z" fill="#5aaa2a"/><rect x="134" y="30" width="4" height="5" fill="#6a3a1a"/><rect x="6" y="57" width="10" height="13" rx="2" fill="#999"/><rect x="5" y="55" width="12" height="3" fill="#666"/><rect x="30" y="50" width="35" height="3" fill="#a05a22"/><rect x="30" y="55" width="35" height="3" fill="#a05a22"/><rect x="28" y="60" width="40" height="4" fill="#8a4a1a"/><rect x="31" y="50" width="3" height="24" fill="#8a4a1a"/><rect x="62" y="50" width="3" height="24" fill="#8a4a1a"/></svg>
<svg class="a" style="left:707px;top:950px" width="45" height="20" viewBox="0 0 45 20"><path d="M10 19 L2 10 Q-1 5 3 2 Q7 0 10 4 Q13 0 17 2 Q21 5 18 10 Z" fill="#ee1111"/><path d="M34 18 L26 10 Q23 5 27 2.5 Q31 1 34 5 Q37 1 41 2.5 Q45 5 42 10 Z" fill="#fff" stroke="#ee2222" stroke-width="1.4"/></svg>
<span class="a" id="tx0" style="left:924.5px;top:226.89px;font:normal bold 19.5px/19.5px 'Liberation Sans',sans-serif;color:#e19c02;white-space:nowrap;-webkit-text-stroke:0.7px #e19c02;transform:scaleX(1.1372);transform-origin:0 0;">ÉCRAN DE FIN DE PARTIE</span>
<span class="a" id="tx1" style="left:1344px;top:229.29px;font:normal bold 19.5px/19.5px 'Liberation Sans',sans-serif;color:#e19c02;white-space:nowrap;-webkit-text-stroke:0.7px #e19c02;transform:scaleX(1.0984);transform-origin:0 0;">OBSTACLES</span>
<span class="a" id="tx2" style="left:504.4px;top:536.29px;font:normal bold 19.5px/19.5px 'Liberation Sans',sans-serif;color:#e19c02;white-space:nowrap;-webkit-text-stroke:0.7px #e19c02;transform:scaleX(1.1797);transform-origin:0 0;">Éléments de l’interface</span>
<span class="a" id="tx3" style="left:504.4px;top:558.79px;font:normal bold 19.5px/19.5px 'Liberation Sans',sans-serif;color:#e19c02;white-space:nowrap;-webkit-text-stroke:0.7px #e19c02;transform:scaleX(1.1560);transform-origin:0 0;">INSTRUCTIONS DU JEU</span>
<span class="a" id="tx4" style="left:922.5px;top:559.29px;font:normal bold 19.5px/19.5px 'Liberation Sans',sans-serif;color:#e19c02;white-space:nowrap;-webkit-text-stroke:0.7px #e19c02;transform:scaleX(1.1806);transform-origin:0 0;">AVATAR et projectiles</span>
<span class="a" id="tx5" style="left:1341.5px;top:534.69px;font:normal bold 19.5px/19.5px 'Liberation Sans',sans-serif;color:#e19c02;white-space:nowrap;-webkit-text-stroke:0.7px #e19c02;transform:scaleX(1.1649);transform-origin:0 0;">Éléments</span>
<span class="a" id="tx6" style="left:1341.5px;top:558.79px;font:normal bold 19.5px/19.5px 'Liberation Sans',sans-serif;color:#e19c02;white-space:nowrap;-webkit-text-stroke:0.7px #e19c02;transform:scaleX(1.1064);transform-origin:0 0;">DÉCOR N1</span>
<span class="a" id="tx7" style="left:504.4px;top:867.09px;font:normal bold 19.5px/19.5px 'Liberation Sans',sans-serif;color:#e19c02;white-space:nowrap;-webkit-text-stroke:0.7px #e19c02;transform:scaleX(1.1687);transform-origin:0 0;">Éléments de la</span>
<span class="a" id="tx8" style="left:504.4px;top:889.29px;font:normal bold 19.5px/19.5px 'Liberation Sans',sans-serif;color:#e19c02;white-space:nowrap;-webkit-text-stroke:0.7px #e19c02;transform:scaleX(1.1451);transform-origin:0 0;">GESTION DU JEU</span>
<span class="a" id="tx9" style="left:925px;top:888.29px;font:normal bold 19.5px/19.5px 'Liberation Sans',sans-serif;color:#e19c02;white-space:nowrap;-webkit-text-stroke:0.7px #e19c02;transform:scaleX(1.1520);transform-origin:0 0;">ANTAGONISTES (2 niveaux)</span>
<span class="a" id="tx10" style="left:1340.4px;top:867.09px;font:normal bold 19.5px/19.5px 'Liberation Sans',sans-serif;color:#e19c02;white-space:nowrap;-webkit-text-stroke:0.7px #e19c02;transform:scaleX(1.1568);transform-origin:0 0;">Éléments</span>
<span class="a" id="tx11" style="left:1340.4px;top:890.29px;font:normal bold 19.5px/19.5px 'Liberation Sans',sans-serif;color:#e19c02;white-space:nowrap;-webkit-text-stroke:0.7px #e19c02;transform:scaleX(1.1143);transform-origin:0 0;">DÉCOR N2</span>
<span class="a" id="tx12" style="left:516px;top:272.57px;font:normal bold 26.5px/26.5px 'Liberation Sans',sans-serif;color:#000;white-space:nowrap;-webkit-text-stroke:0.4px #000;transform:scaleX(1.0908);transform-origin:0 0;">PLANCHES</span>
<span class="a" id="tx13" style="left:516px;top:303.37px;font:normal bold 26.5px/26.5px 'Liberation Sans',sans-serif;color:#000;white-space:nowrap;-webkit-text-stroke:0.4px #000;transform:scaleX(1.1048);transform-origin:0 0;">DE CONCEPTION</span>
<span class="a" id="tx14" style="left:516px;top:336.07px;font:normal bold 26.5px/26.5px 'Liberation Sans',sans-serif;color:#000;white-space:nowrap;-webkit-text-stroke:0.4px #000;transform:scaleX(1.0975);transform-origin:0 0;">DES MÉDIAS</span>
<span class="a" id="tx15" style="left:520px;top:393.57px;font:normal bold 13.5px/13.5px 'Liberation Sans',sans-serif;color:#000;white-space:nowrap;transform:scaleX(0.9856);transform-origin:0 0;">Titre du jeu :</span>
<span class="a" id="tx16" style="left:609px;top:396.56px;font:normal bold 8.2px/8.2px 'Liberation Mono',monospace;color:#000;white-space:nowrap;transform:scaleX(1.3607);transform-origin:0 0;">TRAVERSEE EXTREME : GUERRE ROUTIERE</span>
<span class="a" id="tx17" style="left:520px;top:436.80px;font:normal bold 13px/13px 'Liberation Sans',sans-serif;color:#000;white-space:nowrap;transform:scaleX(0.9831);transform-origin:0 0;">Auteur :</span>
<span class="a" id="tx18" style="left:574px;top:439.65px;font:normal bold 7.5px/7.5px 'Liberation Sans',sans-serif;color:#000;white-space:nowrap;transform:scaleX(0.9412);transform-origin:0 0;">Ugo Nardini</span>
<span class="a" id="tx19" style="left:520px;top:496.07px;font:italic normal 7px/7px 'Liberation Sans',sans-serif;color:#000;white-space:nowrap;transform:scaleX(0.9958);transform-origin:0 0;">Important: vectoriser vos polices de caractères !</span>
<span class="a" id="tx20" style="left:935.6px;top:275.07px;font:normal bold 13.5px/13.5px 'Liberation Sans',sans-serif;color:#000;white-space:nowrap;-webkit-text-stroke:0.4px #000;transform:scaleX(1.1294);transform-origin:0 0;">Texte (choix type) gagné ou perdu</span>
<span class="a" id="tx21" style="left:935.6px;top:290.57px;font:normal bold 13.5px/13.5px 'Liberation Sans',sans-serif;color:#000;white-space:nowrap;-webkit-text-stroke:0.4px #000;transform:scaleX(1.1170);transform-origin:0 0;">+ bouton rejouer</span>
<span class="a" id="tx22" style="left:1353px;top:279.42px;font:normal bold 12.5px/12.5px 'Liberation Sans',sans-serif;color:#000;white-space:nowrap;-webkit-text-stroke:0.4px #000;transform:scaleX(1.1574);transform-origin:0 0;">N1</span>
<span class="a" id="tx23" style="left:1353px;top:315.42px;font:normal bold 12.5px/12.5px 'Liberation Sans',sans-serif;color:#000;white-space:nowrap;-webkit-text-stroke:0.4px #000;transform:scaleX(1.1887);transform-origin:0 0;">N2</span>
<span class="a" id="tx24" style="left:517.6px;top:597.37px;font:normal bold 13.5px/13.5px 'Liberation Sans',sans-serif;color:#000;white-space:nowrap;-webkit-text-stroke:0.4px #000;transform:scaleX(1.1274);transform-origin:0 0;">Instructions avec type choisie</span>
<span class="a" id="tx25" style="left:517.6px;top:613.57px;font:normal bold 13.5px/13.5px 'Liberation Sans',sans-serif;color:#000;white-space:nowrap;-webkit-text-stroke:0.4px #000;transform:scaleX(1.1120);transform-origin:0 0;">+ images + bouton «Jouer»</span>
<span class="a" id="tx26" style="left:1352px;top:597.57px;font:normal bold 13.5px/13.5px 'Liberation Sans',sans-serif;color:#000;white-space:nowrap;-webkit-text-stroke:0.4px #000;transform:scaleX(1.1531);transform-origin:0 0;">Fixe et défilant</span>
<span class="a" id="tx27" style="left:515px;top:928.51px;font:normal bold 10.5px/10.5px 'Liberation Sans',sans-serif;color:#000;white-space:nowrap;transform:scaleX(0.9682);transform-origin:0 0;">Affichage des points de vie (énergie) :</span>
<span class="a" id="tx28" style="left:602.5px;top:954.01px;font:normal bold 10.5px/10.5px 'Liberation Sans',sans-serif;color:#000;white-space:nowrap;transform:scaleX(0.9582);transform-origin:0 0;">Affichage des vies :</span>
<span class="a" id="tx29" style="left:586px;top:973.71px;font:normal bold 10.5px/10.5px 'Liberation Sans',sans-serif;color:#000;white-space:nowrap;transform:scaleX(0.9651);transform-origin:0 0;">Affichage du pointage :</span>
<span class="a" id="tx30" style="left:595.8px;top:986.42px;font:normal bold 6px/6px 'Liberation Sans',sans-serif;color:#000;white-space:nowrap;transform:scaleX(1.1765);transform-origin:0 0;">(avec type choisie / vectoriser)</span>
<span class="a" id="tx31" style="left:712px;top:976.03px;font:normal bold 10px/10px 'Liberation Mono',monospace;color:#000;white-space:nowrap;transform:scaleX(1.0738);transform-origin:0 0;">SCORE:100</span>
<span class="a" id="tx32" style="left:933.5px;top:939.42px;font:normal bold 12.5px/12.5px 'Liberation Sans',sans-serif;color:#000;white-space:nowrap;-webkit-text-stroke:0.4px #000;transform:scaleX(1.2074);transform-origin:0 0;">N1</span>
<span class="a" id="tx33" style="left:933.5px;top:976.42px;font:normal bold 12.5px/12.5px 'Liberation Sans',sans-serif;color:#000;white-space:nowrap;-webkit-text-stroke:0.4px #000;transform:scaleX(1.2199);transform-origin:0 0;">N2</span>
<span class="a" id="tx34" style="left:1347.6px;top:926.57px;font:normal bold 13.5px/13.5px 'Liberation Sans',sans-serif;color:#000;white-space:nowrap;-webkit-text-stroke:0.4px #000;transform:scaleX(1.1520);transform-origin:0 0;">Fixe et défilant</span>
</body></html>
